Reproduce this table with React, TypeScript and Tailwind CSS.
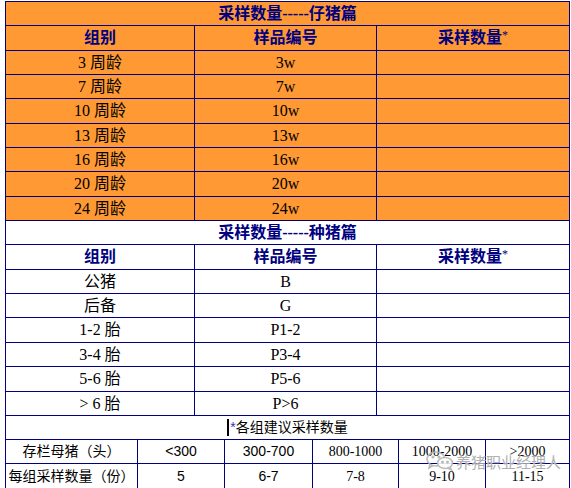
import React from "react";

const serif = "font-['Liberation_Serif','Noto_Sans_CJK_SC',serif]";
const sans = "font-['Liberation_Sans','Noto_Sans_CJK_SC',sans-serif]";

const topRows: [string, string, string][] = [
  ["3 周龄", "3w", "h-[24px]"],
  ["7 周龄", "7w", "h-[24px]"],
  ["10 周龄", "10w", "h-[25px]"],
  ["13 周龄", "13w", "h-[24px]"],
  ["16 周龄", "16w", "h-[24px]"],
  ["20 周龄", "20w", "h-[25px]"],
  ["24 周龄", "24w", "h-[24px]"],
];

const midRows: [string, string, string][] = [
  ["公猪", "B", "h-[24px]"],
  ["后备", "G", "h-[24px]"],
  ["1-2 胎", "P1-2", "h-[25px]"],
  ["3-4 胎", "P3-4", "h-[24px]"],
  ["5-6 胎", "P5-6", "h-[25px]"],
  ["> 6 胎", "P>6", "h-[24px]"],
];

const cellBase = "flex items-center justify-center border-r border-[#000080]";

function WeChatIcon() {
  return (
    <svg width="30" height="20" viewBox="0 0 30 20" fill="none" stroke="#b5b5b5" strokeWidth="1.6">
      <ellipse cx="11" cy="8" rx="9" ry="7" />
      <path d="M5 13 L4 17 L8 14.5" />
      <ellipse cx="20" cy="12" rx="7.5" ry="5.5" fill="white" />
      <path d="M25 16 L26.5 19 L22.5 17" />
      <circle cx="8" cy="6" r="0.8" fill="#b5b5b5" />
      <circle cx="14" cy="6" r="0.8" fill="#b5b5b5" />
      <circle cx="17.5" cy="11" r="0.7" fill="#b5b5b5" />
      <circle cx="22.5" cy="11" r="0.7" fill="#b5b5b5" />
    </svg>
  );
}

export default function App() {
  return (
    <div className="w-[571px] h-[488px] bg-white overflow-hidden relative">
      <div className={`ml-[5px] mt-[1px] w-[565px] border-l border-r border-t border-[#000080] ${serif} text-[16px] text-black`}>
        <div className="h-[24px] bg-[#ff9933] border-b border-[#000080] flex items-center justify-center font-bold text-[#000080]">
          采样数量-----仔猪篇
        </div>
        <div className="h-[25px] bg-[#ff9933] border-b border-[#000080] grid grid-cols-[189px_182px_192px] font-bold text-[#000080]">
          <div className={cellBase}>组别</div>
          <div className={cellBase}>样品编号</div>
          <div className="flex items-center justify-center">
            采样数量<span className="font-normal text-[12px] -mt-[6px]">*</span>
          </div>
        </div>
        {topRows.map(([a, b, h]) => (
          <div key={a} className={`${h} bg-[#ff9933] border-b border-[#000080] grid grid-cols-[189px_182px_192px]`}>
            <div className={cellBase}>{a}</div>
            <div className={cellBase}>{b}</div>
            <div />
          </div>
        ))}
        <div className="h-[24px] border-b border-[#000080] flex items-center justify-center font-bold text-[#000080]">
          采样数量-----种猪篇
        </div>
        <div className="h-[25px] border-b border-[#000080] grid grid-cols-[189px_182px_192px] font-bold text-[#000080]">
          <div className={cellBase}>组别</div>
          <div className={cellBase}>样品编号</div>
          <div className="flex items-center justify-center">
            采样数量<span className="font-normal text-[12px] -mt-[6px]">*</span>
          </div>
        </div>
        {midRows.map(([a, b, h]) => (
          <div key={a} className={`${h} border-b border-[#000080] grid grid-cols-[189px_182px_192px]`}>
            <div className={cellBase}>{a}</div>
            <div className={cellBase}>{b}</div>
            <div />
          </div>
        ))}
        <div className={`h-[24px] border-b border-[#000080] flex items-center justify-center ${sans} text-[14px]`}>
          <span className="inline-block w-[2px] h-[17px] bg-black mr-[1px]" />
          <span className="text-[#3333cc]">*</span>各组建议采样数量
        </div>
        <div className="h-[24px] border-b border-[#000080] grid grid-cols-[132px_87px_88px_86px_87px_83px] text-[14px]">
          <div className={`${cellBase} ${sans}`}>存栏母猪（头）</div>
          <div className={`${cellBase} ${sans}`}>&lt;300</div>
          <div className={`${cellBase} ${sans}`}>300-700</div>
          <div className={cellBase}>800-1000</div>
          <div className={cellBase}>1000-2000</div>
          <div className="flex items-center justify-center">&gt;2000</div>
        </div>
        <div className="h-[25px] border-b border-[#000080] grid grid-cols-[132px_87px_88px_86px_87px_83px] text-[14px]">
          <div className={`${cellBase} ${sans}`}>每组采样数量（份）</div>
          <div className={`${cellBase} ${sans}`}>5</div>
          <div className={`${cellBase} ${sans}`}>6-7</div>
          <div className={cellBase}>7-8</div>
          <div className={cellBase}>9-10</div>
          <div className="flex items-center justify-center">11-15</div>
        </div>
      </div>
      <div className="absolute left-[425px] top-[451px] flex items-center gap-[1px] opacity-90">
        <WeChatIcon />
        <span className="font-['Noto_Sans_CJK_SC',sans-serif] text-[15px] leading-none text-[#a8a8a8] [text-shadow:0_0_1px_white,0_0_1px_white]">
          养猪职业经理人
        </span>
      </div>
    </div>
  );
}
